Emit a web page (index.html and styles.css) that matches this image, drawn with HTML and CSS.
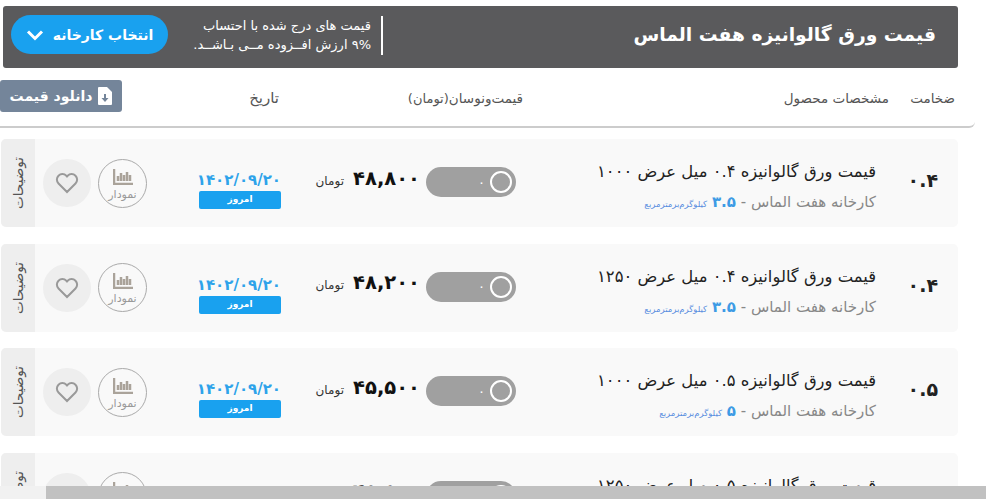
FILE: index.html
```html
<!DOCTYPE html>
<html lang="fa" dir="rtl">

<head>
    <meta charset="UTF-8">
    <meta name="viewport" content="width=device-width, initial-scale=1.0">
    <title>قیمت ورق گالوانیزه هفت الماس</title>
    <link rel="stylesheet" href="styles.css">
</head>

<body>
    <div class="page">

        <!-- Title bar -->
        <div class="title-bar">
            <h1 class="title">قیمت ورق گالوانیزه هفت الماس</h1>
            <div class="vat-note">
                <p>قیمت های درج شده با احتساب</p>
                <p>۹% ارزش افــزوده مــی بـاشــد.</p>
            </div>
            <button class="factory-btn">
                <span>انتخاب کارخانه</span>
                <svg class="chevron" viewBox="0 0 18 12"><path d="M2 2.500 9 9.500 16 2.500" /></svg>
            </button>
        </div>

        <!-- Table head -->
        <div class="table-head">
            <span class="head-thick">ضخامت</span>
            <span class="head-spec">مشخصات محصول</span>
            <span class="head-price">قیمت‌ونوسان<small>(تومان)</small></span>
            <span class="head-date">تاریخ</span>
            <button class="download-btn">
                <svg class="file-icon" viewBox="0 0 14 18">
                    <path d="M1 0h8l5 5v12a1 1 0 0 1-1 1H1a1 1 0 0 1-1-1V1a1 1 0 0 1 1-1z" fill="#fff" />
                    <path d="M6 7h2v4h2.500L7 15 3.500 11H6z" fill="#74859a" />
                </svg>
                <span>دانلود قیمت</span>
            </button>
        </div>

        <!-- Price rows -->
        <div class="rows">
            <div class="row">
                <div class="thick">۰.۴</div>
                <div class="product">
                    <h3>قیمت ورق گالوانیزه ۰.۴ میل عرض ۱۰۰۰</h3>
                    <p>کارخانه هفت الماس - <b>۳.۵</b> <small>کیلوگرم‌برمترمربع</small></p>
                </div>
                <div class="toggle"><span class="knob"></span><span class="toggle-val">۰</span></div>
                <div class="price"><strong>۴۸,۸۰۰</strong> <small>تومان</small></div>
                <div class="date"><span>۱۴۰۲/۰۹/۲۰</span><em>امروز</em></div>
                <div class="chart">
                    <svg viewBox="0 0 20 16"><path d="M1 0v15h19M5 12V7M8 12V4M11 12V6M14 12V3M17 12V6" /></svg>
                    <span>نمودار</span>
                </div>
                <div class="fav">
                    <svg viewBox="0 0 24 22"><path d="M12 20 3.500 11.500a5.500 5.500 0 0 1 7.800-7.800L12 4.500l.7-.8a5.500 5.500 0 0 1 7.800 7.800z" /></svg>
                </div>
                <div class="side"><span>توضیحات</span></div>
            </div>

            <div class="row">
                <div class="thick">۰.۴</div>
                <div class="product">
                    <h3>قیمت ورق گالوانیزه ۰.۴ میل عرض ۱۲۵۰</h3>
                    <p>کارخانه هفت الماس - <b>۳.۵</b> <small>کیلوگرم‌برمترمربع</small></p>
                </div>
                <div class="toggle"><span class="knob"></span><span class="toggle-val">۰</span></div>
                <div class="price"><strong>۴۸,۲۰۰</strong> <small>تومان</small></div>
                <div class="date"><span>۱۴۰۲/۰۹/۲۰</span><em>امروز</em></div>
                <div class="chart">
                    <svg viewBox="0 0 20 16"><path d="M1 0v15h19M5 12V7M8 12V4M11 12V6M14 12V3M17 12V6" /></svg>
                    <span>نمودار</span>
                </div>
                <div class="fav">
                    <svg viewBox="0 0 24 22"><path d="M12 20 3.500 11.500a5.500 5.500 0 0 1 7.800-7.800L12 4.500l.7-.8a5.500 5.500 0 0 1 7.800 7.800z" /></svg>
                </div>
                <div class="side"><span>توضیحات</span></div>
            </div>

            <div class="row">
                <div class="thick">۰.۵</div>
                <div class="product">
                    <h3>قیمت ورق گالوانیزه ۰.۵ میل عرض ۱۰۰۰</h3>
                    <p>کارخانه هفت الماس - <b>۵</b> <small>کیلوگرم‌برمترمربع</small></p>
                </div>
                <div class="toggle"><span class="knob"></span><span class="toggle-val">۰</span></div>
                <div class="price"><strong>۴۵,۵۰۰</strong> <small>تومان</small></div>
                <div class="date"><span>۱۴۰۲/۰۹/۲۰</span><em>امروز</em></div>
                <div class="chart">
                    <svg viewBox="0 0 20 16"><path d="M1 0v15h19M5 12V7M8 12V4M11 12V6M14 12V3M17 12V6" /></svg>
                    <span>نمودار</span>
                </div>
                <div class="fav">
                    <svg viewBox="0 0 24 22"><path d="M12 20 3.500 11.500a5.500 5.500 0 0 1 7.800-7.800L12 4.500l.7-.8a5.500 5.500 0 0 1 7.800 7.800z" /></svg>
                </div>
                <div class="side"><span>توضیحات</span></div>
            </div>

            <div class="row">
                <div class="thick">۰.۵</div>
                <div class="product">
                    <h3>قیمت ورق گالوانیزه ۰.۵ میل عرض ۱۲۵۰</h3>
                    <p>کارخانه هفت الماس - <b>۵</b> <small>کیلوگرم‌برمترمربع</small></p>
                </div>
                <div class="toggle"><span class="knob"></span><span class="toggle-val">۰</span></div>
                <div class="price"><strong>۴۵,۵۰۰</strong> <small>تومان</small></div>
                <div class="date"><span>۱۴۰۲/۰۹/۲۰</span><em>امروز</em></div>
                <div class="chart">
                    <svg viewBox="0 0 20 16"><path d="M1 0v15h19M5 12V7M8 12V4M11 12V6M14 12V3M17 12V6" /></svg>
                    <span>نمودار</span>
                </div>
                <div class="fav">
                    <svg viewBox="0 0 24 22"><path d="M12 20 3.500 11.500a5.500 5.500 0 0 1 7.800-7.800L12 4.500l.7-.8a5.500 5.500 0 0 1 7.800 7.800z" /></svg>
                </div>
                <div class="side"><span>توضیحات</span></div>
            </div>
        </div>
    </div>

    <!-- Horizontal scrollbar -->
    <div class="scrollbar"><div class="scrollbar-thumb"></div></div>
</body>

</html>
```

FILE: styles.css
```css
/* Reset */
* {
    margin: 0;
    padding: 0;
    box-sizing: border-box;
}

html,
body {
    height: 100%;
    overflow: hidden;
}

body {
    font-family: "DejaVu Sans", sans-serif;
    background-color: #fff;
    color: #333;
}

.page {
    width: 986px;
    padding-top: 6px;
}

button {
    font-family: inherit;
    border: none;
}

/* Title bar */
.title-bar {
    display: flex;
    align-items: center;
    width: 955px;
    height: 62px;
    margin-right: 28px;
    padding: 0 22px 5px 8px;
    background-color: #5a5a5c;
    border-radius: 3px;
    color: #fff;
}

.title {
    font-size: 18.700px;
    font-weight: bold;
    margin-left: auto;
    white-space: nowrap;
}

.vat-note {
    width: 187px;
    height: 39px;
    margin-top: 2px;
    margin-left: 28px;
    padding-right: 10px;
    border-right: 2px solid #fff;
    font-size: 13px;
    line-height: 19px;
    white-space: nowrap;
}

.factory-btn {
    display: flex;
    align-items: center;
    justify-content: center;
    gap: 9px;
    width: 157px;
    height: 39px;
    background-color: #19a1ef;
    border-radius: 20px;
    color: #fff;
    font-size: 14px;
    font-weight: bold;
}

.chevron {
    width: 18px;
    height: 12px;
    fill: none;
    stroke: #fff;
    stroke-width: 3;
}

/* Table head */
.table-head {
    display: flex;
    align-items: center;
    width: 975px;
    height: 60px;
    margin-right: 11px;
    padding-right: 20px;
    padding-bottom: 2px;
    border-bottom: 2px solid #ccc;
    border-bottom-right-radius: 6px;
    font-size: 13.500px;
    color: #555;
    white-space: nowrap;
}

.table-head > span {
    margin-top: 4px;
}

.head-thick {
    width: 48px;
}

.head-spec {
    width: 384px;
    padding-right: 18px;
}

.head-price {
    width: 244px;
}

.head-price small {
    font-size: 13px;
}

.head-date {
    width: 157px;
    font-size: 15px;
}

.download-btn {
    display: flex;
    align-items: center;
    justify-content: center;
    gap: 6px;
    width: 122px;
    height: 32px;
    background-color: #74859a;
    border-radius: 3px;
    color: #fff;
    font-size: 14px;
    font-weight: bold;
}

.file-icon {
    width: 14px;
    height: 18px;
}

/* Price rows */
.rows {
    display: flex;
    flex-direction: column;
    gap: 16.500px;
    margin-top: 11px;
    margin-right: 28px;
    width: 957px;
}

.row {
    display: flex;
    align-items: center;
    flex-shrink: 0;
    height: 88px;
    background-color: #f9f9f9;
    border-radius: 5px;
    overflow: hidden;
}

.thick {
    width: 82px;
    margin-bottom: 6px;
    padding-right: 20px;
    font-size: 19px;
    font-weight: bold;
    color: #222;
}

.product {
    width: 360px;
    margin-top: 10px;
    white-space: nowrap;
}

.product h3 {
    font-size: 16.400px;
    font-weight: normal;
    color: #222;
    line-height: 30px;
}

.product p {
    font-size: 15px;
    color: #888;
    line-height: 30px;
}

.product b {
    font-size: 15px;
    color: #3d9be5;
}

.product small {
    font-size: 8.500px;
    color: #5a8ee0;
}

.toggle {
    position: relative;
    display: flex;
    align-items: center;
    gap: 5px;
    width: 90px;
    height: 30px;
    margin-bottom: 2px;
    margin-left: 6px;
    padding-right: 4px;
    background-color: #a0a0a0;
    border-radius: 15px;
}

.knob {
    width: 22px;
    height: 22px;
    border: 2px solid #fff;
    border-radius: 50%;
}

.toggle-val {
    font-size: 13px;
    color: #fff;
}

.price {
    width: 104px;
    margin-bottom: 10px;
    margin-left: 35px;
    white-space: nowrap;
}

.price strong {
    font-size: 19.500px;
    color: #111;
}

.price small {
    font-size: 12px;
    margin-right: 4px;
}

.date {
    display: flex;
    flex-direction: column;
    align-items: stretch;
    gap: 2px;
    width: 82px;
    margin-top: 14px;
    margin-left: 52px;
    text-align: center;
    white-space: nowrap;
}

.date span {
    font-size: 15px;
    font-weight: bold;
    color: #2ea3ea;
}

.date em {
    height: 18px;
    background-color: #19a1ef;
    border-radius: 2px;
    color: #fff;
    font-size: 9px;
    font-style: normal;
    font-weight: bold;
    line-height: 17px;
}

.chart {
    display: flex;
    flex-direction: column;
    align-items: center;
    gap: 3px;
    width: 49px;
    height: 49px;
    margin-left: 7px;
    padding-top: 9px;
    border: 1px solid #aaa;
    border-radius: 50%;
    color: #999;
    font-size: 11px;
}

.chart svg {
    flex-shrink: 0;
    width: 20px;
    height: 16px;
    fill: none;
    stroke: #aaa39a;
    stroke-width: 2.500;
}

.fav {
    display: flex;
    align-items: center;
    justify-content: center;
    width: 48px;
    height: 48px;
    margin-left: 8px;
    background-color: #eee;
    border-radius: 50%;
}

.fav svg {
    width: 24px;
    height: 22px;
    fill: none;
    stroke: #999;
    stroke-width: 2;
}

.side {
    display: flex;
    align-items: center;
    justify-content: center;
    width: 34px;
    height: 100%;
    background-color: #eee;
    color: #555;
    font-size: 13.500px;
}

.side span {
    transform: rotate(-90deg);
    white-space: nowrap;
}

/* Scrollbar */
.scrollbar {
    position: fixed;
    left: 0;
    right: 0;
    bottom: 0;
    height: 13px;
    background-color: #f1f1f1;
}

.scrollbar-thumb {
    height: 100%;
    margin-left: 46px;
    background-color: #c1c1c1;
}
```
